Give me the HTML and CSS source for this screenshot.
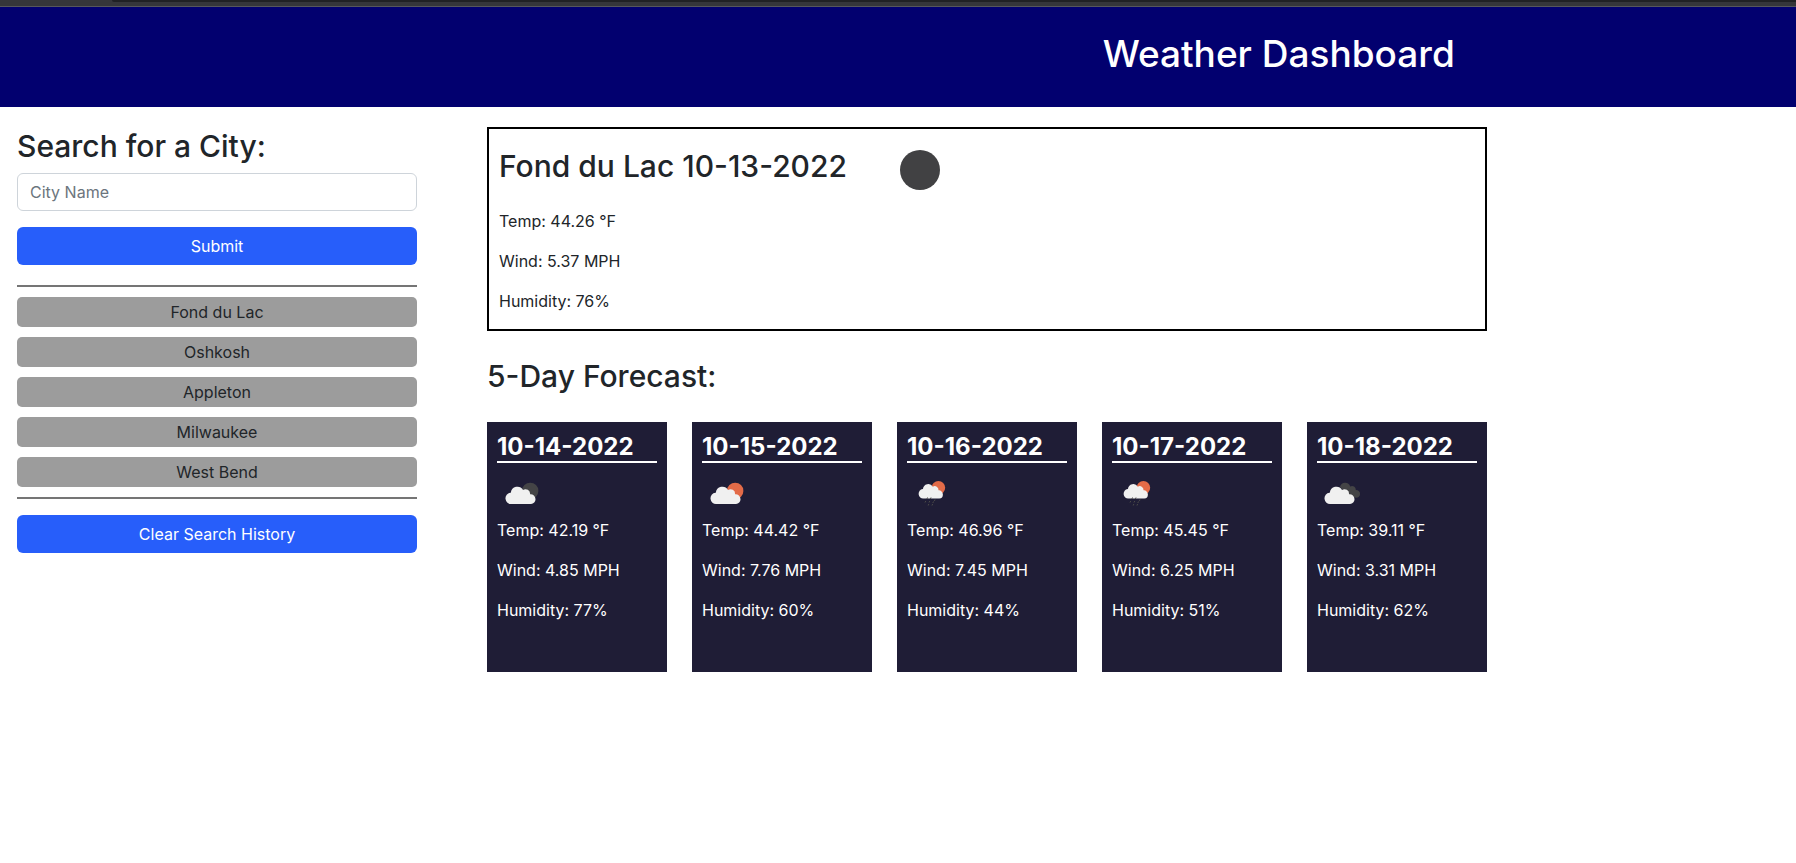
FILE: index.html
```html
<!DOCTYPE html>
<html lang="en">
<head>
<meta charset="utf-8">
<meta name="viewport" content="width=device-width, initial-scale=1">
<title>Weather Dashboard</title>
<link rel="stylesheet" href="styles.css">
</head>
<body>
<svg class="defs" aria-hidden="true">
  <defs>
    <path id="cloud" d="M7.5 21.5a5.3 5.3 0 0 1-1-10.6h.3A6.4 6.4 0 0 1 18.6 8.4a4.4 4.4 0 0 1 6.8 4 4.7 4.7 0 0 1 5.2 4.6 4.5 4.5 0 0 1-4.3 4.5z"/>
  </defs>
</svg>
<div class="topbar"><div class="topbar-field"></div></div>
<header class="header"><h1 class="title">Weather Dashboard</h1></header>
<div class="layout">
  <aside class="sidebar">
    <form class="search" onsubmit="return false">
      <label class="heading" for="city">Search for a City:</label>
      <input class="city-input" id="city" type="text" placeholder="City Name">
      <button class="btn" type="submit">Submit</button>
    </form>
    <div class="history">
      <button class="past" type="button">Fond du Lac</button>
      <button class="past" type="button">Oshkosh</button>
      <button class="past" type="button">Appleton</button>
      <button class="past" type="button">Milwaukee</button>
      <button class="past" type="button">West Bend</button>
    </div>
    <button class="btn clear" type="button">Clear Search History</button>
  </aside>
  <main class="main">
    <section class="current">
      <div class="current-head">
        <h2 class="heading">Fond du Lac 10-13-2022</h2>
        <svg class="moon" viewBox="0 0 40 40" aria-hidden="true"><circle cx="20" cy="20" r="20" fill="#414143"/></svg>
      </div>
      <p class="reading">Temp: 44.26 °F</p>
      <p class="reading">Wind: 5.37 MPH</p>
      <p class="reading">Humidity: 76%</p>
    </section>
    <h2 class="heading forecast-heading">5-Day Forecast:</h2>
    <section class="forecast">
      <article class="card">
        <h3 class="date">10-14-2022</h3>
        <svg class="icon" viewBox="0 0 50 50" aria-hidden="true">
          <circle cx="33.2" cy="22.9" r="8.2" fill="#444446"/>
          <use href="#cloud" transform="translate(6.7 13) scale(1.04 1.07)" fill="#f0f0f0"/>
        </svg>
        <p class="reading">Temp: 42.19 °F</p>
        <p class="reading">Wind: 4.85 MPH</p>
        <p class="reading">Humidity: 77%</p>
      </article>
      <article class="card">
        <h3 class="date">10-15-2022</h3>
        <svg class="icon" viewBox="0 0 50 50" aria-hidden="true">
          <circle cx="33.2" cy="22.9" r="8.2" fill="#e36b48"/>
          <use href="#cloud" transform="translate(6.7 13) scale(1.04 1.07)" fill="#f0f0f0"/>
        </svg>
        <p class="reading">Temp: 44.42 °F</p>
        <p class="reading">Wind: 7.76 MPH</p>
        <p class="reading">Humidity: 60%</p>
      </article>
      <article class="card">
        <h3 class="date">10-16-2022</h3>
        <svg class="icon" viewBox="0 0 50 50" aria-hidden="true">
          <circle cx="31.4" cy="19.7" r="6.8" fill="#e36b48"/>
          <use href="#cloud" transform="translate(10.2 11.2) scale(.84 .9)" fill="#f0f0f0"/>
          <path d="M20.5 29.5l-.6 1.5M24 29.5l-.6 1.5M18.8 33l-.8 1.5M22.8 33l-.8 1.5M28 31.5l-.6 1.5M26.5 33.5l-.7 1.5M21.8 36l-.6 1.5M25.6 36l-.6 1.5" stroke="#4b4a49" fill="none"/>
        </svg>
        <p class="reading">Temp: 46.96 °F</p>
        <p class="reading">Wind: 7.45 MPH</p>
        <p class="reading">Humidity: 44%</p>
      </article>
      <article class="card">
        <h3 class="date">10-17-2022</h3>
        <svg class="icon" viewBox="0 0 50 50" aria-hidden="true">
          <circle cx="31.4" cy="19.7" r="6.8" fill="#e36b48"/>
          <use href="#cloud" transform="translate(10.2 11.2) scale(.84 .9)" fill="#f0f0f0"/>
          <path d="M20.5 29.5l-.6 1.5M24 29.5l-.6 1.5M18.8 33l-.8 1.5M22.8 33l-.8 1.5M28 31.5l-.6 1.5M26.5 33.5l-.7 1.5M21.8 36l-.6 1.5M25.6 36l-.6 1.5" stroke="#4b4a49" fill="none"/>
        </svg>
        <p class="reading">Temp: 45.45 °F</p>
        <p class="reading">Wind: 6.25 MPH</p>
        <p class="reading">Humidity: 51%</p>
      </article>
      <article class="card">
        <h3 class="date">10-18-2022</h3>
        <svg class="icon" viewBox="0 0 50 50" aria-hidden="true">
          <path d="M23 19a5.3 5.3 0 0 1 10.2-.6 3.8 3.8 0 0 1 5.6 3.6 4 4 0 0 1 4.3 4c0 2.4-1.8 3.8-4 3.8L32 28z" fill="#444446"/>
          <use href="#cloud" transform="translate(5.7 13) scale(1.04 1.07)" fill="#f0f0f0"/>
        </svg>
        <p class="reading">Temp: 39.11 °F</p>
        <p class="reading">Wind: 3.31 MPH</p>
        <p class="reading">Humidity: 62%</p>
      </article>
    </section>
  </main>
</div>
</body>
</html>
```

FILE: styles.css
```css
* { box-sizing: border-box; }

body {
  margin: 0;
  background: #fff;
  color: #212529;
  font-family: Inter, "Liberation Sans", sans-serif;
  font-size: 16px;
  line-height: 24px;
}

h1, h2, h3, p { margin: 0; }

.defs { display: none; }

.topbar {
  height: 7px;
  padding-left: 112px;
  background: #35363a;
  border-bottom: 1px solid #56575b;
}

.topbar-field {
  height: 2px;
  background: #202124;
  border-bottom-left-radius: 4px;
}

.header {
  display: flex;
  justify-content: flex-end;
  height: 100px;
  padding: 23px 19% 0 0;
  background: #02006f;
  color: #fff;
}

.title {
  font-size: 37px;
  font-weight: 500;
  line-height: 48px;
}

.layout {
  display: flex;
  gap: 70px;
  padding: 20px 17px;
}

.sidebar { flex: 0 1 400px; }

.main { flex: 0 1 1000px; }

.heading {
  font-size: 30px;
  font-weight: 500;
  line-height: 38px;
}

.search {
  display: flex;
  flex-direction: column;
}

.city-input {
  width: 100%;
  height: 38px;
  margin: 8px 0 16px;
  padding: 6px 12px;
  border: 1px solid #ced4da;
  border-radius: 6px;
  background: #fff;
  color: #212529;
  font: inherit;
}

.city-input::placeholder { color: #6c757d; }

.btn {
  width: 100%;
  height: 38px;
  padding: 6px 12px;
  border: 0;
  border-radius: 6px;
  background: #275efa;
  color: #fff;
  font: inherit;
}

.history {
  display: grid;
  gap: 10px;
  margin: 20px 0 16px;
  padding: 10px 0;
  border-top: 2px solid #757575;
  border-bottom: 2px solid #757575;
}

.past {
  height: 30px;
  padding: 0 12px;
  border: 0;
  border-radius: 5px;
  background: #9c9c9c;
  color: #212529;
  font: inherit;
}

.current {
  padding: 0 10px;
  border: 2px solid #000;
}

.current-head {
  display: flex;
  align-items: center;
  gap: 53px;
  height: 80px;
  padding-top: 2px;
}

.current-head .heading { padding-bottom: 8px; }

.moon {
  width: 40px;
  height: 40px;
}

.reading { margin-bottom: 16px; }

.forecast-heading { margin: 26px 0 27px; }

.forecast {
  display: grid;
  grid-template-columns: repeat(5, 1fr);
  gap: 25px;
}

.card {
  min-height: 250px;
  padding: 10px;
  background: #1f1d36;
  color: #fff;
}

.date {
  border-bottom: 2px solid #fff;
  font-size: 24px;
  font-weight: 700;
  line-height: 29px;
}

.icon {
  display: block;
  width: 50px;
  height: 50px;
  margin-top: 5px;
}
```
